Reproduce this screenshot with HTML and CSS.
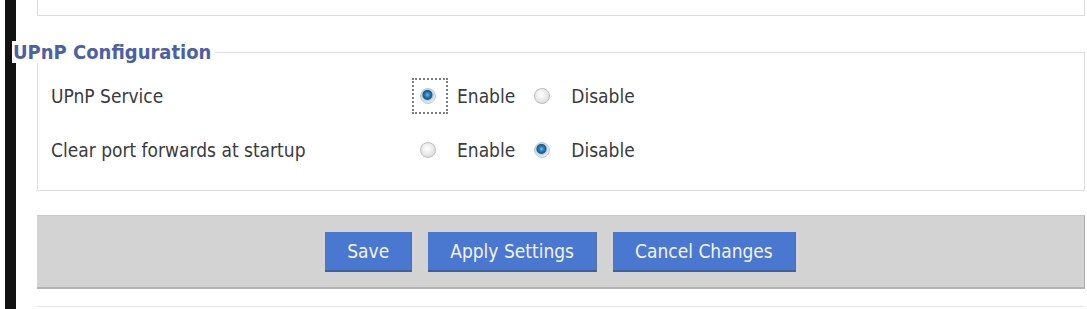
FILE: index.html
```html
<!DOCTYPE html>
<html lang="en">
<head>
<meta charset="utf-8">
<title>UPnP Configuration</title>
<link rel="stylesheet" href="styles.css">
</head>
<body>
<div class="page">
  <div class="rail"></div>
  <main class="content">
    <div class="prev-box"></div>
    <fieldset class="section">
      <legend class="section-title">UPnP Configuration</legend>
      <div class="setting">
        <span class="setting-label">UPnP Service</span>
        <div class="choices">
          <label class="choice"><span class="radio-wrap focus-ring"><input class="radio" type="radio" name="upnp" checked></span><span>Enable</span></label>
          <label class="choice"><span class="radio-wrap"><input class="radio" type="radio" name="upnp"></span><span>Disable</span></label>
        </div>
      </div>
      <div class="setting">
        <span class="setting-label">Clear port forwards at startup</span>
        <div class="choices">
          <label class="choice"><span class="radio-wrap"><input class="radio" type="radio" name="clear"></span><span>Enable</span></label>
          <label class="choice"><span class="radio-wrap"><input class="radio" type="radio" name="clear" checked></span><span>Disable</span></label>
        </div>
      </div>
    </fieldset>
    <div class="button-bar">
      <button class="btn" type="button">Save</button>
      <button class="btn" type="button">Apply Settings</button>
      <button class="btn" type="button">Cancel Changes</button>
    </div>
    <div class="next-box"></div>
  </main>
</div>
</body>
</html>
```

FILE: styles.css
```css
html, body {
  margin: 0;
  padding: 0;
  background: #ffffff;
}

body {
  font-family: "DejaVu Sans Condensed", "DejaVu Sans", sans-serif;
  font-stretch: condensed;
  font-size: 19px;
  color: #3b3a40;
  width: 1087px;
  height: 309px;
  overflow: hidden;
}

.page {
  display: flex;
  height: 309px;
}

.rail {
  flex: 0 0 11px;
  margin-left: 5px;
  background: #111111;
}

.content {
  flex: 1;
  margin-left: 21px;
  margin-right: 2px;
  display: flex;
  flex-direction: column;
}

.prev-box {
  height: 15px;
  border: 1px solid #dcdcdc;
  border-top: none;
}

.section {
  margin: 25px 0 0 0;
  padding: 0 12px 25px 13px;
  border: 1px solid #dedede;
  min-width: 0;
}

.section-title {
  margin-left: -39px;
  padding: 0 4px 0 1px;
  background: #ffffff;
  color: #4b60a6;
  font-weight: bold;
  font-size: 20px;
  line-height: 22px;
}

.setting {
  display: flex;
  align-items: center;
  height: 30px;
  margin-top: 24px;
}

.setting:first-of-type {
  margin-top: 18px;
}

.setting-label {
  width: 369px;
  flex: none;
}

.choices {
  display: flex;
  align-items: center;
}

.choice {
  display: flex;
  align-items: center;
  margin-right: 19px;
}

.radio-wrap {
  position: relative;
  display: flex;
  margin-right: 21px;
}

.focus-ring::after {
  content: "";
  position: absolute;
  top: -10px;
  bottom: -10px;
  left: -8px;
  right: -12px;
  border: 2px dotted #7d7d7d;
}

.radio {
  -webkit-appearance: none;
  appearance: none;
  box-sizing: border-box;
  width: 16px;
  height: 16px;
  margin: 0;
  border-radius: 50%;
  border: 1px solid #bdbdbd;
  background: radial-gradient(circle at 45% 40%, #ffffff 0, #ececec 45%, #d2d2d2 100%);
}

.radio:checked {
  border-color: #c0c9d4;
  background: radial-gradient(circle at 46% 42%, #7cc0ea 0, #2f86c0 2px, #1d5f95 4px, #2a5f8c 4.6px, #b9cde0 5.4px, #dfe8f1 7px);
}

.button-bar {
  margin-top: 24px;
  height: 74px;
  box-sizing: border-box;
  background: #d3d3d3;
  border-top: 1px solid #c9c9c9;
  border-right: 1px solid #a9a9a9;
  border-bottom: 2px solid #b4b4b4;
  display: flex;
  justify-content: center;
  align-items: center;
  gap: 16px;
}

.btn {
  height: 40px;
  padding: 0 22px;
  border: none;
  border-bottom: 2px solid #40609c;
  border-right: 1px solid #5a6f96;
  background: #4a77d0;
  color: #f2f4fa;
  font-family: inherit;
  font-stretch: condensed;
  font-size: 19px;
}

.next-box {
  margin-top: 17px;
  border-top: 1px solid #e4e4e4;
}
```
